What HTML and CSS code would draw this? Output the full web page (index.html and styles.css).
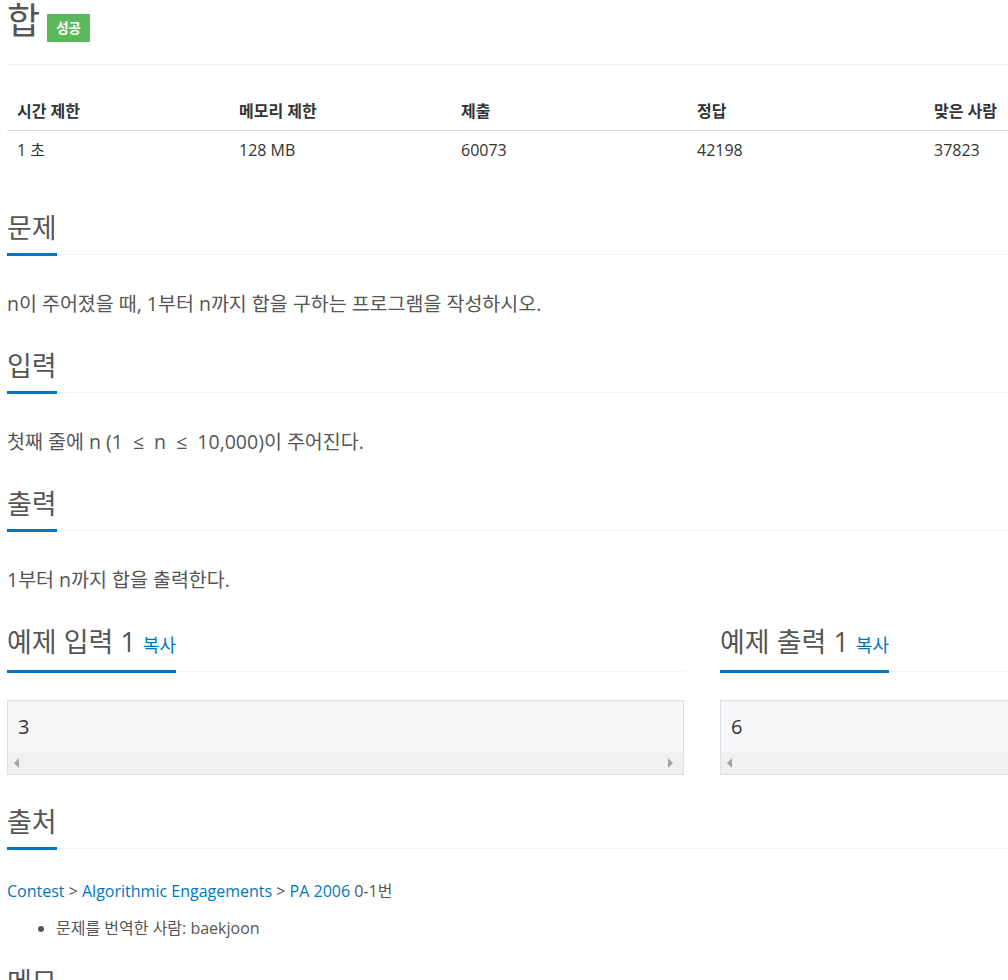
FILE: index.html
```html
<!DOCTYPE html>
<html lang="ko">
   <head>
      <meta charset="UTF-8">
      <meta name="viewport" content="width=device-width, initial-scale=1.0">
      <title>합</title>
      <link rel="stylesheet" href="styles.css">
   </head>

   <body>
      <div class="container">

         <!-------------------TITLE------------------->
         <div class="page-header">
            <h1>
               <span class="problem-title">합</span>
               <span class="problem-label">성공</span>
            </h1>
         </div>

         <!-----------------INFO TABLE---------------->
         <table class="problem-info">
            <thead>
               <tr>
                  <th>시간 제한</th>
                  <th>메모리 제한</th>
                  <th>제출</th>
                  <th>정답</th>
                  <th>맞은 사람</th>
                  <th>정답 비율</th>
               </tr>
            </thead>
            <tbody>
               <tr>
                  <td>1 초</td>
                  <td>128 MB</td>
                  <td>60073</td>
                  <td>42198</td>
                  <td>37823</td>
                  <td>70.944%</td>
               </tr>
            </tbody>
         </table>

         <!------------------SECTIONS----------------->
         <section class="problem-section">
            <div class="headline"><h2>문제</h2></div>
            <p class="problem-text">n이 주어졌을 때, 1부터 n까지 합을 구하는 프로그램을 작성하시오.</p>
         </section>

         <section class="problem-section">
            <div class="headline"><h2>입력</h2></div>
            <p class="problem-text">첫째 줄에 n (1 <span class="rel">≤</span> n <span class="rel">≤</span> 10,000)이 주어진다.</p>
         </section>

         <section class="problem-section">
            <div class="headline"><h2>출력</h2></div>
            <p class="problem-text">1부터 n까지 합을 출력한다.</p>
         </section>

         <!-------------------SAMPLES----------------->
         <div class="sample-row">
            <section class="sample-col">
               <div class="headline"><h2>예제 입력 1 <span class="copy-button">복사</span></h2></div>
               <div class="sampledata">
                  <pre>3</pre>
                  <div class="fake-scroll">
                     <span class="arrow-left"></span>
                     <span class="arrow-right"></span>
                  </div>
               </div>
            </section>
            <section class="sample-col">
               <div class="headline"><h2>예제 출력 1 <span class="copy-button">복사</span></h2></div>
               <div class="sampledata">
                  <pre>6</pre>
                  <div class="fake-scroll">
                     <span class="arrow-left"></span>
                     <span class="arrow-right"></span>
                  </div>
               </div>
            </section>
         </div>

         <!-------------------SOURCE------------------>
         <section class="source-section">
            <div class="headline"><h2>출처</h2></div>
            <p class="source-path">
               <a href="#">Contest</a> &gt; <a href="#">Algorithmic Engagements</a> &gt; <a href="#">PA 2006</a> 0-1번
            </p>
            <ul class="source-list">
               <li>문제를 번역한 사람: baekjoon</li>
            </ul>
         </section>

         <section class="problem-section">
            <div class="headline"><h2>메모</h2></div>
         </section>
      </div>
   </body>
</html>
```

FILE: styles.css
```css
*{
   box-sizing: border-box;
   margin: 0;
   padding: 0;
}

html{
   overflow: hidden;
}

body{
   font-family: "Open Sans", "Noto Sans CJK KR", sans-serif;
   font-size: 16px;
   color: #333;
   background: #fff;
}

a{
   color: #0076c0;
   text-decoration: none;
}

.container{
   width: 1397px;
   padding-left: 7px;
}

/*****************TITLE*****************/
.page-header{
   border-bottom: 1px solid #eee;
   padding-bottom: 22px;
}

.page-header h1{
   display: flex;
   align-items: flex-start;
   gap: 7px;
   font-weight: normal;
}

.problem-title{
   font-size: 36px;
   line-height: 42px;
   color: #555;
}

.problem-label{
   margin-top: 14px;
   height: 28px;
   line-height: 28px;
   padding: 0 9px;
   background-color: #5cb85c;
   color: #fff;
   font-size: 13.5px;
   font-weight: bold;
}

/*****************TABLE*****************/
.problem-info{
   width: 1390px;
   margin: 27px 0 42px;
   border-collapse: collapse;
   table-layout: fixed;
}

.problem-info th,
.problem-info td{
   padding: 8px 10px;
   line-height: 22px;
   text-align: left;
}

.problem-info th{
   font-weight: bold;
   border-bottom: 1px solid #ddd;
}

.problem-info th:nth-child(1),
.problem-info th:nth-child(2){
   width: 222px;
}

.problem-info th:nth-child(3),
.problem-info th:nth-child(6){
   width: 236px;
}

/****************HEADLINE***************/
.headline{
   border-bottom: 1px dotted #dfe5ec;
   margin-bottom: 31px;
}

.headline h2{
   display: inline-block;
   font-size: 27px;
   font-weight: normal;
   line-height: 34px;
   color: #555;
   padding-bottom: 8px;
   border-bottom: 3px solid #0076c0;
   margin-bottom: -2px;
}

.copy-button{
   font-size: 18px;
   color: #0076c0;
}

/****************SECTIONS***************/
.problem-section{
   margin-bottom: 30px;
}

.problem-text{
   padding-top: 3px;
   font-size: 19.5px;
   line-height: 30px;
   color: #555;
}

.rel{
   padding: 0 5px;
}

/****************SAMPLES****************/
.sample-row{
   display: flex;
   gap: 36px;
   width: 1390px;
   margin-bottom: 30px;
}

.sample-col{
   width: 677px;
}

.sample-col .headline{
   margin-bottom: 28px;
}

.sampledata{
   border: 1px solid #dcdfe4;
   background-color: #f7f7f9;
}

.sampledata pre{
   padding: 11px 10px 10px;
   font-family: "Open Sans", sans-serif;
   font-size: 20px;
   line-height: 30px;
   color: #333;
}

.fake-scroll{
   display: flex;
   justify-content: space-between;
   align-items: center;
   height: 22px;
   padding: 0 10px 0 6px;
   background-color: #f0f0f0;
}

.arrow-left{
   border-top: 5px solid transparent;
   border-bottom: 5px solid transparent;
   border-right: 5px solid #a3a3a3;
}

.arrow-right{
   border-top: 5px solid transparent;
   border-bottom: 5px solid transparent;
   border-left: 5px solid #a3a3a3;
}

/*****************SOURCE****************/
.source-section .headline{
   margin-bottom: 30px;
}

.source-path{
   font-size: 16px;
   line-height: 24px;
   color: #555;
}

.source-list{
   margin: 13px 0 25px;
   padding-left: 49px;
   font-size: 16px;
   line-height: 24px;
   color: #555;
}
```
